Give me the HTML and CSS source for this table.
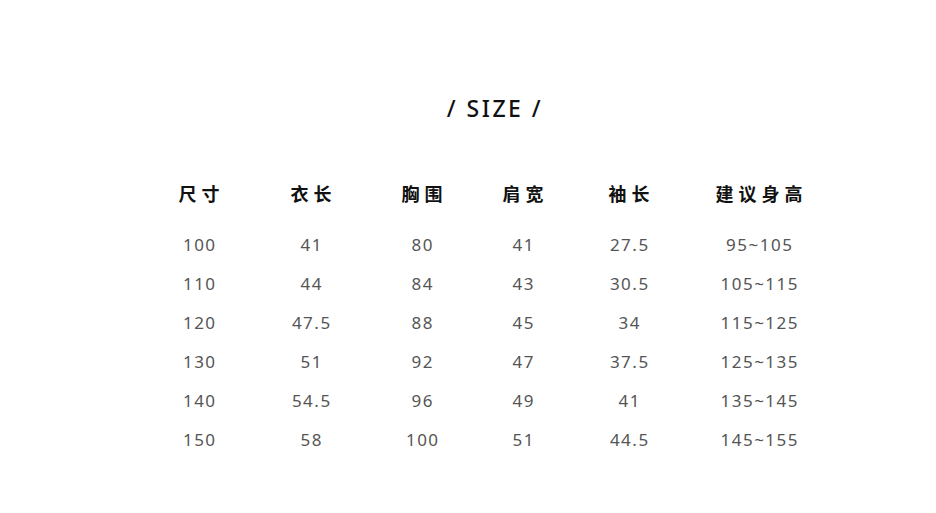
FILE: index.html
```html
<!DOCTYPE html>
<html lang="zh">
<head>
<meta charset="utf-8">
<link rel="stylesheet" href="styles.css">
</head>
<body>
<main class="page">
  <h1 class="title">/ SIZE /</h1>
  <div class="table">
    <div class="row head">
      <div class="cell">尺寸</div><div class="cell">衣长</div><div class="cell">胸围</div><div class="cell">肩宽</div><div class="cell">袖长</div><div class="cell">建议身高</div>
    </div>
    <div class="row"><div class="cell">100</div><div class="cell">41</div><div class="cell">80</div><div class="cell">41</div><div class="cell">27.5</div><div class="cell">95~105</div></div>
    <div class="row"><div class="cell">110</div><div class="cell">44</div><div class="cell">84</div><div class="cell">43</div><div class="cell">30.5</div><div class="cell">105~115</div></div>
    <div class="row"><div class="cell">120</div><div class="cell">47.5</div><div class="cell">88</div><div class="cell">45</div><div class="cell">34</div><div class="cell">115~125</div></div>
    <div class="row"><div class="cell">130</div><div class="cell">51</div><div class="cell">92</div><div class="cell">47</div><div class="cell">37.5</div><div class="cell">125~135</div></div>
    <div class="row"><div class="cell">140</div><div class="cell">54.5</div><div class="cell">96</div><div class="cell">49</div><div class="cell">41</div><div class="cell">135~145</div></div>
    <div class="row"><div class="cell">150</div><div class="cell">58</div><div class="cell">100</div><div class="cell">51</div><div class="cell">44.5</div><div class="cell">145~155</div></div>
  </div>
</main>
</body>
</html>
```
FILE: styles.css
```css
* { box-sizing: border-box; }
html, body { margin: 0; padding: 0; background: #fff; }
body { width: 936px; height: 513px; overflow: hidden; font-family: "Noto Sans", "Noto Sans CJK SC", sans-serif; }
.page { padding-top: 93px; }
.title {
  margin: 0;
  width: 936px;
  padding-left: 54px;
  text-align: center;
  font-size: 23px;
  font-weight: 500;
  letter-spacing: 2.5px;
  color: #111;
  line-height: 30px;
}
.table { margin-left: 143px; width: 686px; margin-top: 58px; }
.row {
  display: grid;
  grid-template-columns: 112px 112px 110px 92px 120px 140px;
  height: 39px;
  align-items: center;
}
.cell {
  text-align: center;
  font-size: 17px;
  color: #555;
  letter-spacing: 1.5px;
  padding-left: 1.5px;
}
.head { height: 44px; align-items: start; }
.head .cell {
  font-family: "Noto Sans CJK SC", sans-serif;
  font-weight: 700;
  font-size: 18px;
  color: #111;
  letter-spacing: 5px;
  padding-left: 5px;
  line-height: 24px;
}
```
